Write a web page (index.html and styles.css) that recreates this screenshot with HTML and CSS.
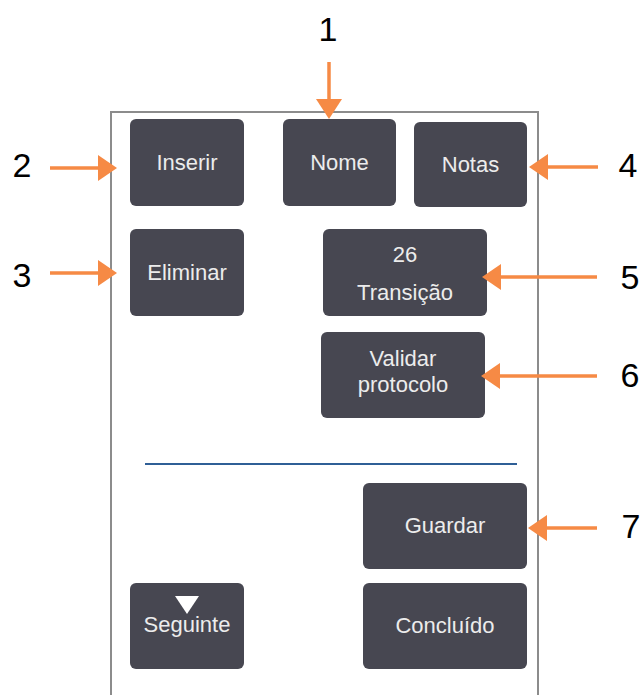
FILE: index.html
```html
<!DOCTYPE html>
<html lang="pt">
<head>
  <meta charset="UTF-8" />
  <meta name="viewport" content="width=device-width, initial-scale=1.0" />
  <title>Editar protocolo</title>
  <link rel="stylesheet" href="styles.css">
</head>
<body>
  <div class="page">
    <div class="panel">
      <div class="row row-top">
        <div class="btn">Inserir</div>
        <div class="btn btn-name">Nome</div>
        <div class="btn btn-notes">Notas</div>
      </div>
      <div class="row row-mid">
        <div class="btn">Eliminar</div>
        <div class="btn btn-wide btn-step">
          <span>26</span>
          <span>Transição</span>
        </div>
      </div>
      <div class="row row-validate">
        <div class="btn btn-wide btn-two">
          <span>Validar</span>
          <span>protocolo</span>
        </div>
      </div>
      <div class="divider"></div>
      <div class="row row-save">
        <div class="btn btn-wide">Guardar</div>
      </div>
      <div class="row row-bottom">
        <div class="btn btn-next">
          <svg width="24" height="18" viewBox="0 0 24 18"><polygon points="0,0 24,0 12,18" fill="#fff"/></svg>
          <span>Seguinte</span>
        </div>
        <div class="btn btn-wide btn-done">Concluído</div>
      </div>
    </div>

    <!-- callouts -->
    <svg class="arrows" width="644" height="695" viewBox="0 0 644 695">
      <g stroke="#f68a45" stroke-width="3.5" fill="none">
        <line x1="329" y1="62" x2="329" y2="101"/>
        <line x1="50" y1="168" x2="100" y2="168"/>
        <line x1="50" y1="273" x2="100" y2="273"/>
        <line x1="598" y1="167" x2="547" y2="167"/>
        <line x1="597" y1="277" x2="500" y2="277"/>
        <line x1="597" y1="376" x2="499" y2="376"/>
        <line x1="597" y1="528" x2="546" y2="528"/>
      </g>
      <g fill="#f68a45">
        <polygon points="316,99 342,99 329,119"/>
        <polygon points="98,155 98,181 117,168"/>
        <polygon points="98,260 98,286 117,273"/>
        <polygon points="548,154 548,180 529,167"/>
        <polygon points="501,264 501,290 482,277"/>
        <polygon points="500,363 500,389 481,376"/>
        <polygon points="547,515 547,541 528,528"/>
      </g>
    </svg>
    <span class="num n1">1</span>
    <span class="num n2">2</span>
    <span class="num n3">3</span>
    <span class="num n4">4</span>
    <span class="num n5">5</span>
    <span class="num n6">6</span>
    <span class="num n7">7</span>
  </div>
</body>
</html>
```

FILE: styles.css
```css
body {
  margin: 0;
  background: #fff;
  font-family: "Liberation Sans", Arial, sans-serif;
}
.page {
  position: relative;
  width: 644px;
  height: 695px;
  overflow: hidden;
  padding-top: 111px;
  box-sizing: border-box;
}
.panel {
  margin-left: 110px;
  width: 429px;
  height: 600px;
  box-sizing: border-box;
  border: 2px solid #8c8c8c;
  border-bottom: none;
  padding-top: 6px;
}
.row {
  display: flex;
  align-items: flex-start;
  padding-left: 18px;
}
.btn {
  width: 114px;
  height: 87px;
  flex-shrink: 0;
  background: #474751;
  border-radius: 6px;
  color: #ececec;
  font-size: 22px;
  display: flex;
  align-items: center;
  justify-content: center;
  text-align: center;
}
.btn-wide {
  width: 164px;
  height: 86px;
}
.btn-name {
  margin-left: 39px;
  width: 113px;
}
.btn-notes {
  margin-left: 18px;
  margin-top: 3px;
  width: 113px;
  height: 85px;
}
.row-mid {
  margin-top: 22px;
}
.btn-step {
  margin-left: 79px;
  height: 87px;
  flex-direction: column;
  line-height: 38px;
  padding-top: 3px;
  box-sizing: border-box;
}
.row-validate {
  margin-top: 16px;
}
.btn-two {
  margin-left: 191px;
  flex-direction: column;
  line-height: 26px;
  padding-bottom: 6px;
  box-sizing: border-box;
}
.divider {
  margin: 45px 0 0 33px;
  width: 372px;
  height: 2px;
  background: #2f5f96;
}
.row-save {
  margin-top: 18px;
}
.row-save .btn {
  margin-left: 233px;
}
.row-bottom {
  margin-top: 14px;
}
.btn-next {
  height: 86px;
  flex-direction: column;
  justify-content: flex-start;
  padding-top: 13px;
  box-sizing: border-box;
  line-height: 22px;
}
.btn-next svg {
  display: block;
}
.btn-done {
  margin-left: 119px;
}
.arrows {
  position: absolute;
  left: 0;
  top: 0;
}
.num {
  position: absolute;
  width: 30px;
  text-align: center;
  font-size: 34px;
  line-height: 34px;
  color: #000;
}
.n1 { left: 313px; top: 12px; }
.n2 { left: 7px; top: 148px; }
.n3 { left: 7px; top: 258px; }
.n4 { left: 613px; top: 148px; }
.n5 { left: 615px; top: 260px; }
.n6 { left: 615px; top: 358px; }
.n7 { left: 616px; top: 509px; }
```
